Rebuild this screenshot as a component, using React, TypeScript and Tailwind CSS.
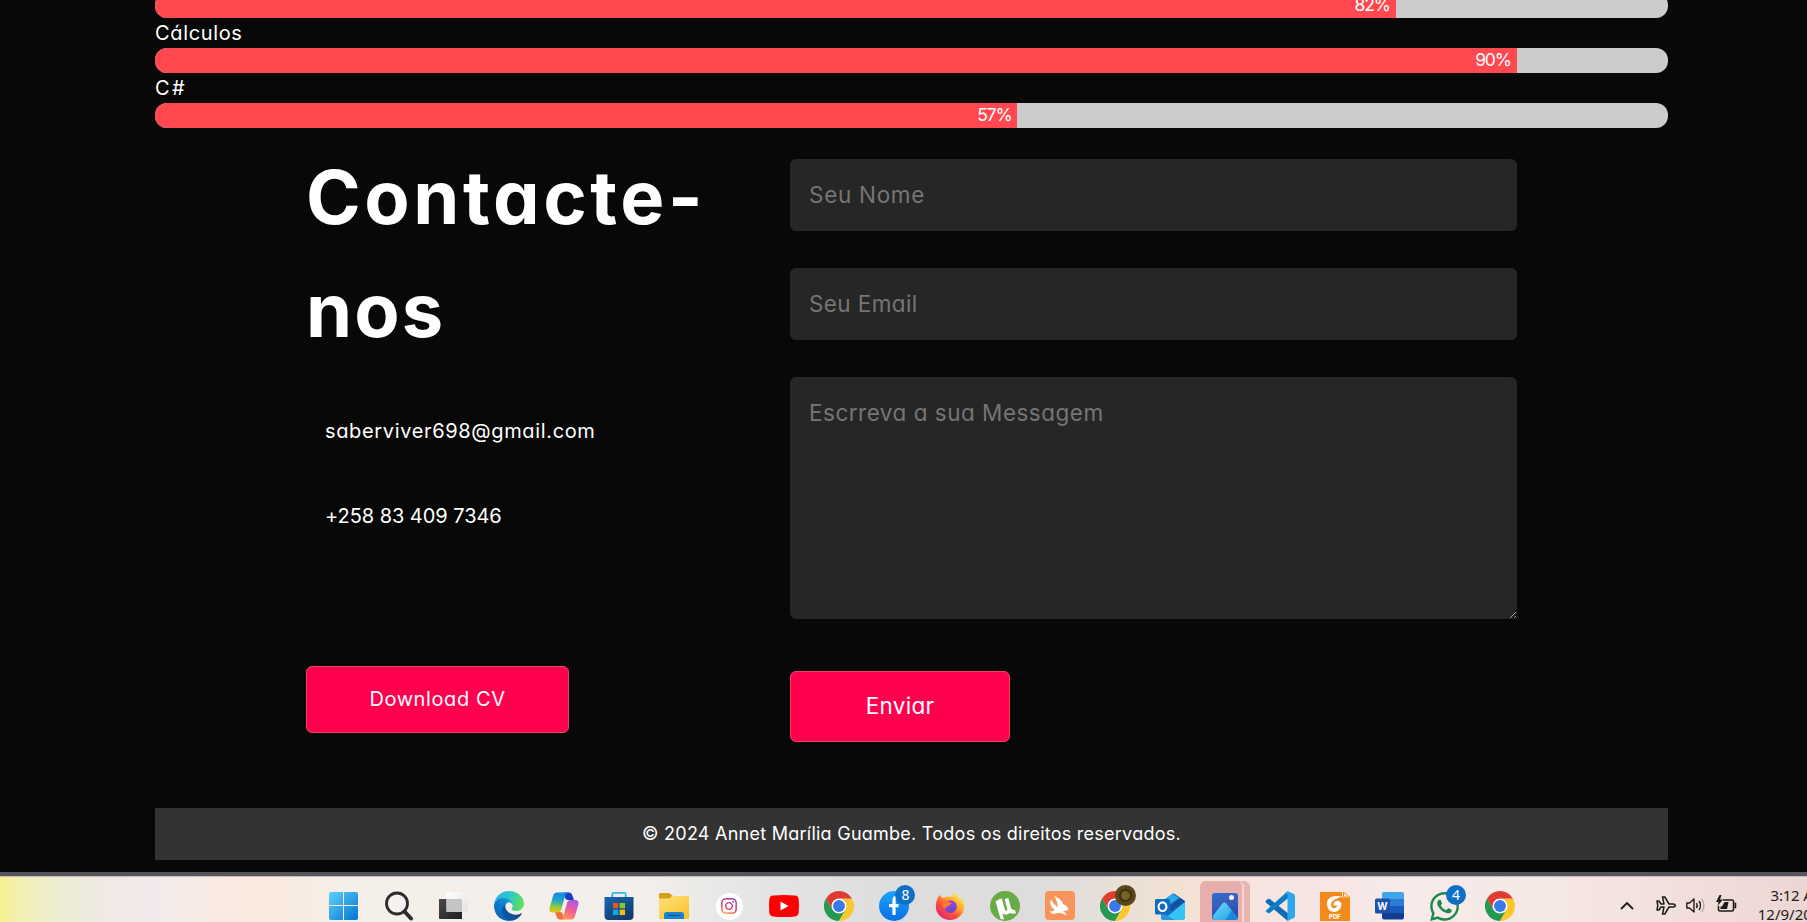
import type { ReactNode } from "react";
import { FaInstagram, FaWhatsapp } from "react-icons/fa";

const skills = [
  { name: "", value: 82, track: "" },
  { name: "Cálculos", value: 90, track: "tracking-[0.65px]" },
  { name: "C#", value: 57, track: "tracking-[2.5px]" },
];

function SkillBar({ value }: { value: number }) {
  return (
    <div className="h-[25px] overflow-hidden rounded-[12px] bg-[#cccccc]">
      <div
        className="flex h-full items-center justify-end bg-[#ff4850] pr-[6px] pb-[1px] text-[17.5px] leading-none tracking-[-1.2px] text-white"
        style={{ width: `${value}%` }}
      >
        {value}%
      </div>
    </div>
  );
}

function Windows() {
  return (
    <svg viewBox="0 0 30 30" className="size-full">
      <defs>
        <linearGradient id="win" x1="0" y1="0" x2="1" y2="1">
          <stop offset="0" stopColor="#5fd2fb" />
          <stop offset="1" stopColor="#0273d2" />
        </linearGradient>
      </defs>
      <path d="M2 1H14V14H0V3Q0 1 2 1ZM15 1H27Q29 1 29 3V14H15ZM0 15H14V29H2Q0 29 0 27ZM15 15H29V27Q29 29 27 29H15Z" fill="url(#win)" />
    </svg>
  );
}

function Search() {
  return (
    <svg viewBox="0 0 30 30" className="size-full">
      <circle cx="13" cy="12.500" r="10.500" fill="#f4f4f3" fillOpacity="0.7" stroke="#2d2c2b" strokeWidth="2.800" />
      <path d="M20.500 20.500L27 27.500" stroke="#2d2c2b" strokeWidth="4" strokeLinecap="round" />
    </svg>
  );
}

function TaskView() {
  return (
    <svg viewBox="0 0 30 30" className="size-full">
      <defs>
        <linearGradient id="tvd" x1="0" y1="0" x2="1" y2="1">
          <stop offset="0" stopColor="#4a4a4a" />
          <stop offset="1" stopColor="#1f1f1f" />
        </linearGradient>
        <linearGradient id="tvl" x1="0" y1="0" x2="1" y2="1">
          <stop offset="0" stopColor="#ffffff" />
          <stop offset="1" stopColor="#e2e2e2" />
        </linearGradient>
      </defs>
      <path d="M0 8H23V28H1Q0 28 0 27Z" fill="url(#tvd)" />
      <rect x="7.500" y="1" width="21.500" height="20" rx="1" fill="url(#tvl)" />
      <rect x="7.500" y="8" width="15.500" height="13" fill="#c4c4c4" />
    </svg>
  );
}

function Edge() {
  return (
    <svg viewBox="0 0 256 256" className="size-full">
      <defs>
        <linearGradient id="ea" x1="0.100" y1="0.700" x2="0.950" y2="0.700">
          <stop offset="0" stopColor="#0c59a4" />
          <stop offset="1" stopColor="#114a8b" />
        </linearGradient>
        <linearGradient id="eb" x1="0.900" y1="0.100" x2="0.300" y2="0.900">
          <stop offset="0" stopColor="#1b9de2" />
          <stop offset="0.500" stopColor="#0f7fcb" />
          <stop offset="1" stopColor="#0667b8" />
        </linearGradient>
        <linearGradient id="ec" x1="0" y1="0.300" x2="1" y2="0.500">
          <stop offset="0" stopColor="#2fb5e6" />
          <stop offset="0.450" stopColor="#2bc3d2" />
          <stop offset="1" stopColor="#62e05a" />
        </linearGradient>
      </defs>
      <path fill="url(#ea)" d="M231 190.500c-3.400 1.800-6.900 3.400-10.500 4.700a101.900 101.900 0 0 1-35.900 6.500c-47.300 0-88.500-32.500-88.500-74.300a31.500 31.500 0 0 1 16.400-27.300c-42.800 1.800-53.800 46.400-53.800 72.500 0 73.900 68.100 81.400 82.800 81.400 7.900 0 19.800-2.300 27-4.600l1.300-.4a128.300 128.300 0 0 0 66.600-52.800 4 4 0 0 0-5.400-5.700Z" />
      <path fill="url(#eb)" d="M105.700 241.400a79.200 79.200 0 0 1-22.700-21.300 80.700 80.700 0 0 1 29.500-120c3.200-1.500 8.500-4.100 15.600-4a32.400 32.400 0 0 1 25.700 13 31.900 31.900 0 0 1 6.300 18.700c0-.2 24.500-79.600-80-79.600-43.900 0-80 41.600-80 78.200a130.200 130.200 0 0 0 12.100 56 128 128 0 0 0 156.400 67 75.500 75.500 0 0 1-62.800-8Z" />
      <path fill="url(#ec)" d="M152.300 148.900c-.9 1-3.400 2.500-3.400 5.700 0 2.600 1.700 5.100 4.700 7.200 14.400 10 41.500 8.700 41.600 8.700a59.600 59.600 0 0 0 30.300-8.300 61.400 61.400 0 0 0 30.400-52.900c.3-22.400-8-37.300-11.300-43.900C223.500 23.900 177.700 0 128 0A128 128 0 0 0 0 126.200c.5-36.500 36.800-66 80-66 3.500 0 23.500.3 42 10 16.300 8.600 24.900 18.900 30.800 29.200 6.200 10.700 7.300 24.100 7.300 29.500s-2.700 13.300-7.800 20Z" />
    </svg>
  );
}

function Copilot() {
  return (
    <svg viewBox="0 0 30 30" className="size-full">
      <defs>
        <linearGradient id="ca" x1="0.300" y1="0" x2="0.200" y2="1">
          <stop offset="0" stopColor="#1389ea" />
          <stop offset="0.400" stopColor="#27a6c0" />
          <stop offset="0.700" stopColor="#8ccb3f" />
          <stop offset="1" stopColor="#f4c30a" />
        </linearGradient>
        <linearGradient id="cb" x1="0.800" y1="0" x2="0.300" y2="1">
          <stop offset="0" stopColor="#a45af0" />
          <stop offset="0.450" stopColor="#ed569f" />
          <stop offset="1" stopColor="#ff9a50" />
        </linearGradient>
      </defs>
      <path d="M14 1.500H20Q22.500 1.500 23.400 4.500L25 9H19Q16.500 9 15.800 6Z" fill="#1740c4" />
      <path d="M15.500 28.500H11Q8.500 28.500 7.500 25.500L6 21H11Q13.500 21 14.200 24Z" fill="#f0733f" />
      <path d="M8 1.500H20Q17 1.500 16 5L12.300 18.500Q11.500 21.500 8.500 21.500H3.500Q-.5 21.500 .6 17L4 5Q5 1.500 8 1.500Z" fill="url(#ca)" />
      <path d="M22 28.500H11Q13.500 28.500 14.500 25L18 12Q18.800 9 21.500 9H26Q30.500 9 29.300 13.500L26 25Q25 28.500 22 28.500Z" fill="url(#cb)" />
    </svg>
  );
}

function Store() {
  return (
    <svg viewBox="0 0 30 30" className="size-full">
      <defs>
        <linearGradient id="st" x1="0" y1="0" x2="0.600" y2="1">
          <stop offset="0" stopColor="#1669b0" />
          <stop offset="1" stopColor="#153a6c" />
        </linearGradient>
      </defs>
      <path d="M8.300 6V3Q8.300 1.800 9.500 1.800H20.500Q21.700 1.800 21.700 3V6" fill="none" stroke="#2fb9ea" strokeWidth="1.800" />
      <path d="M.5 6H29.500V25Q29.500 29 25.500 29H4.500Q.5 29 .5 25Z" fill="url(#st)" />
      <path d="M9 12H14.300V17.300H9Z" fill="#f1511b" />
      <path d="M15.600 12H21V17.300H15.600Z" fill="#80cc28" />
      <path d="M9 18.600H14.300V24H9Z" fill="#00adef" />
      <path d="M15.600 18.600H21V24H15.600Z" fill="#fbbc09" />
    </svg>
  );
}

function Explorer() {
  return (
    <svg viewBox="0 0 30 30" className="size-full">
      <defs>
        <linearGradient id="ex" x1="0" y1="0" x2="0.800" y2="1">
          <stop offset="0" stopColor="#ffe27a" />
          <stop offset="1" stopColor="#f8c32f" />
        </linearGradient>
      </defs>
      <path d="M0 3Q0 2 1 2H10L14 5V10H0Z" fill="#d9a016" />
      <path d="M0 7.500H9Q10.500 7.500 11.500 6.500L13 5H29Q30 5 30 6V28H0Z" fill="url(#ex)" />
      <path d="M5 28V23.500Q5 21 7.500 21H22.500Q25 21 25 23.500V28Z" fill="#1b84d0" />
      <path d="M9 24.500H21" stroke="#0d5a9e" strokeWidth="1.500" strokeLinecap="round" />
    </svg>
  );
}

function Instagram() {
  return (
    <div className="flex size-full items-center justify-center">
      <svg width="0" height="0" className="absolute">
        <linearGradient id="ig" x1="0.200" y1="1" x2="0.700" y2="0">
          <stop offset="0" stopColor="#f59a3d" />
          <stop offset="0.450" stopColor="#df2e5c" />
          <stop offset="1" stopColor="#8a38b8" />
        </linearGradient>
      </svg>
      <span className="flex size-[27px] items-center justify-center rounded-full bg-white">
        <FaInstagram size={18} style={{ fill: "url(#ig)" }} />
      </span>
    </div>
  );
}

function YouTube() {
  return (
    <svg viewBox="0 0 30 30" className="size-full">
      <path d="M4 4.600Q15 3.600 26 4.600Q29.300 4.900 29.600 8Q30.300 15 29.600 22Q29.300 25 26 25.400Q15 26.400 4 25.400Q.7 25 .4 22Q-.3 15 .4 8Q.7 4.900 4 4.600Z" fill="#ff0000" />
      <path d="M11.500 10.500V19.500L19.500 15Z" fill="#fff" />
    </svg>
  );
}

function Chrome() {
  return (
    <svg viewBox="0 0 48 48" className="size-full">
      <circle cx="24" cy="24" r="12" fill="#fff" />
      <path d="M3.220 36A24 24 0 0 0 24 48L34.390 30A12 12 0 0 1 13.610 30L3.220 12A24 24 0 0 0 3.220 36Z" fill="#239a50" />
      <path d="M24 48A24 24 0 0 0 44.780 12H24A12 12 0 0 1 34.390 30Z" fill="#fcc72b" />
      <path d="M44.780 12A24 24 0 0 0 3.220 12L13.610 30A12 12 0 0 1 24 12Z" fill="#df3d31" />
      <circle cx="24" cy="24" r="9.500" fill="#3a79ea" />
    </svg>
  );
}

function Badge({ children }: { children: ReactNode }) {
  return (
    <span className="absolute -top-[6px] left-[16px] flex size-[20px] items-center justify-center rounded-full bg-[#0f6fc6] font-['Noto_Sans','Open_Sans',sans-serif] text-[14px] leading-none text-white">
      {children}
    </span>
  );
}

function Facebook() {
  return (
    <>
      <svg viewBox="0 0 30 30" className="size-full">
        <defs>
          <linearGradient id="fb" x1="0" y1="0" x2="0" y2="1">
            <stop offset="0" stopColor="#19a5f8" />
            <stop offset="1" stopColor="#0a6fe4" />
          </linearGradient>
        </defs>
        <circle cx="15" cy="15" r="15" fill="url(#fb)" />
        <path d="M15 24V9Q15 5.800 18.800 6M10 14.600H19.500" fill="none" stroke="#fff" strokeWidth="3.200" />
      </svg>
      <Badge>8</Badge>
    </>
  );
}

function Firefox() {
  return (
    <svg viewBox="0 0 30 30" className="size-full">
      <defs>
        <linearGradient id="ff" x1="0.850" y1="0.100" x2="0.200" y2="0.900">
          <stop offset="0" stopColor="#fff04a" />
          <stop offset="0.350" stopColor="#ffa92e" />
          <stop offset="0.650" stopColor="#ff5239" />
          <stop offset="1" stopColor="#e7286a" />
        </linearGradient>
        <linearGradient id="fp" x1="0.300" y1="0" x2="0.600" y2="1">
          <stop offset="0" stopColor="#b545d8" />
          <stop offset="1" stopColor="#5a48c9" />
        </linearGradient>
      </defs>
      <path d="M18.500 1Q17 3.500 19 5.500Q12 4.500 9 7Q6 6.500 4.500 4Q.8 9 .8 15.500A14.200 13.500 0 0 0 29.200 15.500Q29.200 10 25.500 7Q25 8.500 24.500 8Q22.500 3.500 18.500 1Z" fill="url(#ff)" />
      <circle cx="15.500" cy="15.500" r="6.300" fill="url(#fp)" />
      <path d="M7.500 10Q11.500 9 14.500 11.500L17 12.500Q14 13.500 13 15.500Q10 15 10 18Q6.500 15 7.500 10Z" fill="#ff7b2c" />
    </svg>
  );
}

function Torrent() {
  return (
    <svg viewBox="0 0 30 30" className="size-full">
      <circle cx="15" cy="15" r="15" fill="#69ab45" />
      <path d="M10 8L13 19Q14 22.500 17 21.500Q20 20.500 19 17L16.500 7.500M19 17Q20.500 22 25.500 20.500" fill="none" stroke="#fff" strokeWidth="3.800" />
      <path d="M5.500 10L9.300 9L14 28.500L10.500 28Z" fill="#fff" />
    </svg>
  );
}

function Bunny() {
  return (
    <svg viewBox="0 0 30 30" className="size-full">
      <rect width="30" height="29" rx="4" fill="#f6945c" />
      <path d="M9.500 5Q16.500 8 18 13Q22 14.500 23.500 18.500Q21 20.500 17.500 20Q21 21.500 21.500 24.500Q17 22 14 21.800Q10.500 22.500 8.500 23Q6 22.500 4.500 20Q8 21 9.500 19Q3.500 14 6 8.500Q8.500 13.500 13 16.500Q12.500 10.500 9.500 5Z" fill="#fff" />
    </svg>
  );
}

function ChromeProfile() {
  return (
    <>
      <Chrome />
      <span className="absolute -top-[6px] left-[15px] flex size-[21px] items-center justify-center rounded-full bg-[#59461a]">
        <span className="size-[13px] rounded-full border-2 border-[#3d3010] bg-[#7b6122]" />
      </span>
    </>
  );
}

function Outlook() {
  return (
    <svg viewBox="0 0 30 30" className="size-full">
      <path d="M6 11L17.500 2.800Q18.500 2 19.500 2.800L30 10V26Q30 29 27 29H9Q6 29 6 26Z" fill="#1470c4" />
      <path d="M6 11L17.500 2.800L24 7L9 17L6 15Z" fill="#2ba8e8" />
      <path d="M12 17L25 7L30 10.500L17 20Z" fill="#16509f" />
      <path d="M30 11V26Q30 29 27 29H9L14 24Z" fill="#35c5f2" />
      <path d="M6 21L20 28.900H9Q6 29 6 26Z" fill="#2497df" />
      <rect x="0" y="8" width="15" height="15.500" rx="1.500" fill="#0f6cc0" />
      <ellipse cx="7.500" cy="15.700" rx="3.900" ry="4.300" fill="none" stroke="#fff" strokeWidth="2.200" />
    </svg>
  );
}

function Photos() {
  return (
    <>
      <span className="absolute -top-[10px] -left-[10px] h-[60px] w-[50px] rounded-[6px] bg-[#e9b3b0]" />
      <span className="absolute -top-[10px] -left-[10px] h-[60px] w-[44px] rounded-[6px] border-r-2 border-[#f6d6d3] bg-[#e6aeac]" />
      <svg viewBox="0 0 30 30" className="relative size-full">
        <defs>
          <linearGradient id="ph" x1="0" y1="0" x2="0.300" y2="1">
            <stop offset="0" stopColor="#2f6fd0" />
            <stop offset="0.500" stopColor="#3b5cb8" />
            <stop offset="1" stopColor="#1c4fae" />
          </linearGradient>
          <linearGradient id="pm" x1="0" y1="0" x2="1" y2="1">
            <stop offset="0" stopColor="#6adcfa" />
            <stop offset="1" stopColor="#1f9be4" />
          </linearGradient>
        </defs>
        <rect x="2" y="2" width="26" height="27" rx="3" fill="url(#ph)" />
        <circle cx="21.500" cy="6.500" r="2.500" fill="#f3eef4" />
        <path d="M2.500 25.500L12.300 12.600Q14.300 10.500 16.300 12.600L27.500 26.500Q27 29 24.500 29H5Q3 29 2.500 25.500Z" fill="url(#pm)" />
        <path d="M15.500 29L21.800 19.500L27.500 26.500Q27 29 24.500 29Z" fill="#1b86da" />
      </svg>
    </>
  );
}

function VsCode() {
  return (
    <svg viewBox="0 0 30 30" className="size-full">
      <path d="M1 9.500L3 8Q4 7.500 5 8.200L24 23V29L22 29.500L1 11.500Q0 10.500 1 9.500Z" fill="#0f6db5" />
      <path d="M1 19.500L22 .8L24 6.500L5 21.800Q4 22.500 3 22L1 20.500Q0 20 1 19.500Z" fill="#0f7dc6" />
      <path d="M21.500 .7Q22.300 0 23.500 .5L28.800 3Q30 3.600 30 5V25Q30 26.400 28.800 27L23.500 29.500Q22.300 30 21.500 29.300Q22.500 29 22.500 27.500V2.500Q22.500 1.200 21.500 .7Z" fill="#2ba7ee" />
    </svg>
  );
}

function FoxitPdf() {
  return (
    <svg viewBox="0 0 30 30" className="size-full">
      <path d="M0 1H22V6.500H30V30H0Z" fill="#f28a1e" />
      <path d="M23.500 1L29.500 6H23.500Z" fill="#fbe9da" stroke="#f28a1e" strokeWidth="1" />
      <path d="M22.500 5.500Q7 3 7 13Q7.500 21 14.500 21Q21.500 20 21.500 12.500Q20 9.500 16.500 9.800Q13 11 13.500 14.500H17Q16.500 17.300 14 17.300Q10.800 17 11 13Q12 8 22.500 5.500Z" fill="#fff" />
      <text x="15" y="28.300" textAnchor="middle" fontFamily="Inter, sans-serif" fontWeight="800" fontSize="6" fill="#fff">PDF</text>
    </svg>
  );
}

function Word() {
  return (
    <svg viewBox="0 0 30 30" className="size-full">
      <path d="M7 3Q7 1 9 1H27Q29 1 29 3V8H7Z" fill="#41a5ee" />
      <path d="M7 8H29V15H7Z" fill="#2b7cd3" />
      <path d="M7 15H29V22H7Z" fill="#185abd" />
      <path d="M7 22H29V26Q29 28.500 27 28.500H9Q7 28.500 7 26Z" fill="#103f91" />
      <rect x="0" y="7.500" width="15" height="15" rx="1.500" fill="#1a52ac" />
      <text x="7.500" y="18.800" textAnchor="middle" fontFamily="Inter, sans-serif" fontWeight="700" fontSize="10" fill="#fff">W</text>
    </svg>
  );
}

function WhatsApp() {
  return (
    <>
      <FaWhatsapp size={33} color="#1c8a4d" className="-m-[1.5px]" />
      <Badge>4</Badge>
    </>
  );
}

const apps = [
  Windows, Search, TaskView, Edge, Copilot, Store, Explorer, Instagram, YouTube, Chrome, Facebook,
  Firefox, Torrent, Bunny, ChromeProfile, Outlook, Photos, VsCode, FoxitPdf, Word, WhatsApp, Chrome,
];

function Taskbar() {
  return (
    <div className="flex h-[50px] flex-col">
      <div className="h-[4px] shrink-0 bg-[#55545a]" />
      <div className="flex flex-1 overflow-hidden border-t border-[#c5bfbf] bg-[linear-gradient(90deg,#f6f18d_0px,#f2efb8_25px,#edeed4_60px,#f1e9e6_110px,#f3eaec_160px,#f9ebe1_220px,#f9ebe0_280px,#f5efe9_340px,#f3efec_640px,#e4e5e4_760px,#dddddd_900px,#dedddc_1050px,#f3e2d3_1180px,#f6e4e0_1260px,#f7eae9_1400px,#f6e8e5_1550px,#f1dedb_1700px,#ebd6d4_1807px)]">
        <div className="ml-[329px] flex shrink-0 gap-[25.05px] pt-[14px]">
          {apps.map((Icon, i) => (
            <div key={i} className="relative size-[30px] shrink-0">
              <Icon />
            </div>
          ))}
        </div>
        <div className="ml-[105px] flex shrink-0 items-start pt-[17px] text-[#1d1a1a]">
          <svg width="14" height="20" viewBox="0 0 14 20" fill="none" stroke="currentColor" strokeWidth="1.800">
            <path d="M1 15L7 9L13 15" />
          </svg>
          <svg width="20" height="22" viewBox="0 0 20 22" fill="none" stroke="currentColor" strokeWidth="1.500" strokeLinejoin="round" className="ml-[22px]">
            <path d="M1 7H3L5 10H8L6.500 3H8.800L13 10H17Q19.300 10.300 19.300 11.500T17 13H13L8.800 20H6.500L8 13H5L3 16H1L1.800 11.500Z" />
          </svg>
          <svg width="20" height="22" viewBox="0 0 20 22" fill="none" stroke="currentColor" strokeWidth="1.400" strokeLinejoin="round" className="ml-[10px]">
            <path d="M.8 9H3.500L8 5V18L3.500 14H.8ZM10.500 9Q12 11.500 10.500 14M13 7Q16 11.500 13 16" />
            <path d="M15.800 5Q20 11.500 15.800 18" stroke="#b9a9a8" />
          </svg>
          <svg width="21" height="22" viewBox="0 0 21 22" className="ml-[10px]">
            <path d="M7 6H16Q17.500 6 17.500 7.500V15.500Q17.500 17 16 17H4Q2.500 17 2.500 15.500V12M18.500 9.500H19.500V13.500H18.500" fill="none" stroke="currentColor" strokeWidth="1.500" />
            <path d="M8.500 8H12.500L11 15H4.500V12.500H6Z" fill="currentColor" />
            <path d="M3.500 1L0 8H2.500L1.500 12L7 5.500H4L5.500 1Z" fill="currentColor" />
          </svg>
          <div className="-mt-[8px] ml-[12px] flex w-[80px] shrink-0 flex-col items-end font-['Noto_Sans','Open_Sans',sans-serif] text-[15px] leading-[19px] whitespace-nowrap">
            <span className="pr-[3px] tracking-[-0.2px]">3:12 AM</span>
            <span>12/9/2024</span>
          </div>
        </div>
      </div>
    </div>
  );
}

export default function App() {
  return (
    <div className="flex h-[922px] w-[1807px] flex-col overflow-hidden bg-[#080808] font-['Inter','Liberation_Sans',sans-serif] text-white [font-feature-settings:'cv11'_1]">
      <main className="mr-[139px] ml-[155px] flex h-[872px] shrink-0 flex-col overflow-hidden">
        <section className="-mt-[7px] shrink-0">
          {skills.map((skill) => (
            <div key={skill.value}>
              {skill.name && <p className={`text-[20px] leading-[30px] ${skill.track}`}>{skill.name}</p>}
              <SkillBar value={skill.value} />
            </div>
          ))}
        </section>

        <section className="mx-auto flex h-[680px] w-[1211px] shrink-0 justify-between">
          <div className="flex w-[424px] flex-col items-start pt-[13px]">
            <h1 className="text-[74px] leading-[113px] font-bold">
              <span className="tracking-[3.6px]">Contacte-</span>
              <br />
              <span className="tracking-[2.2px]">nos</span>
            </h1>
            <p className="mt-[49px] pl-[19px] text-[20px] leading-[30px] tracking-[0.65px]">saberviver698@gmail.com</p>
            <p className="mt-[55px] pl-[19px] text-[20px] leading-[30px] tracking-[-0.05px]">+258 83 409 7346</p>
            <a className="mt-[135px] flex h-[67px] w-[263px] items-center justify-center rounded-[6px] border border-[#f0455f] bg-[#ff004f] pb-[1px] text-[20px] leading-[30px] tracking-[0.6px]">
              Download CV
            </a>
          </div>
          <form className="flex w-[727px] flex-col items-start pt-[31px]">
            <input
              placeholder="Seu Nome"
              className="h-[72px] w-full rounded-[6px] bg-[#262626] px-[19px] pb-[1px] text-[22.5px] tracking-[0.7px] placeholder:text-[#757575]"
            />
            <input
              placeholder="Seu Email"
              className="mt-[37px] h-[72px] w-full rounded-[6px] bg-[#262626] px-[19px] pb-[1px] text-[22.5px] tracking-[0.4px] placeholder:text-[#757575]"
            />
            <textarea
              placeholder="Escrreva a sua Messagem"
              className="mt-[37px] h-[242px] w-full resize rounded-[6px] bg-[#262626] px-[19px] pt-[19px] text-[22.5px] leading-[34px] tracking-[0.5px] placeholder:text-[#757575]"
            />
            <button
              type="button"
              className="mt-[52px] h-[71px] w-[220px] rounded-[6px] border border-[#f0455f] bg-[#ff004f] pb-[1px] text-[22.5px] tracking-[0.3px]"
            >
              Enviar
            </button>
          </form>
        </section>

        <footer className="flex h-[52px] shrink-0 items-center justify-center bg-[#333333] pb-[1px] text-[18px] leading-[27px] tracking-[0.25px]">
          © 2024 Annet Marília Guambe. Todos os direitos reservados.
        </footer>
      </main>
      <Taskbar />
    </div>
  );
}
